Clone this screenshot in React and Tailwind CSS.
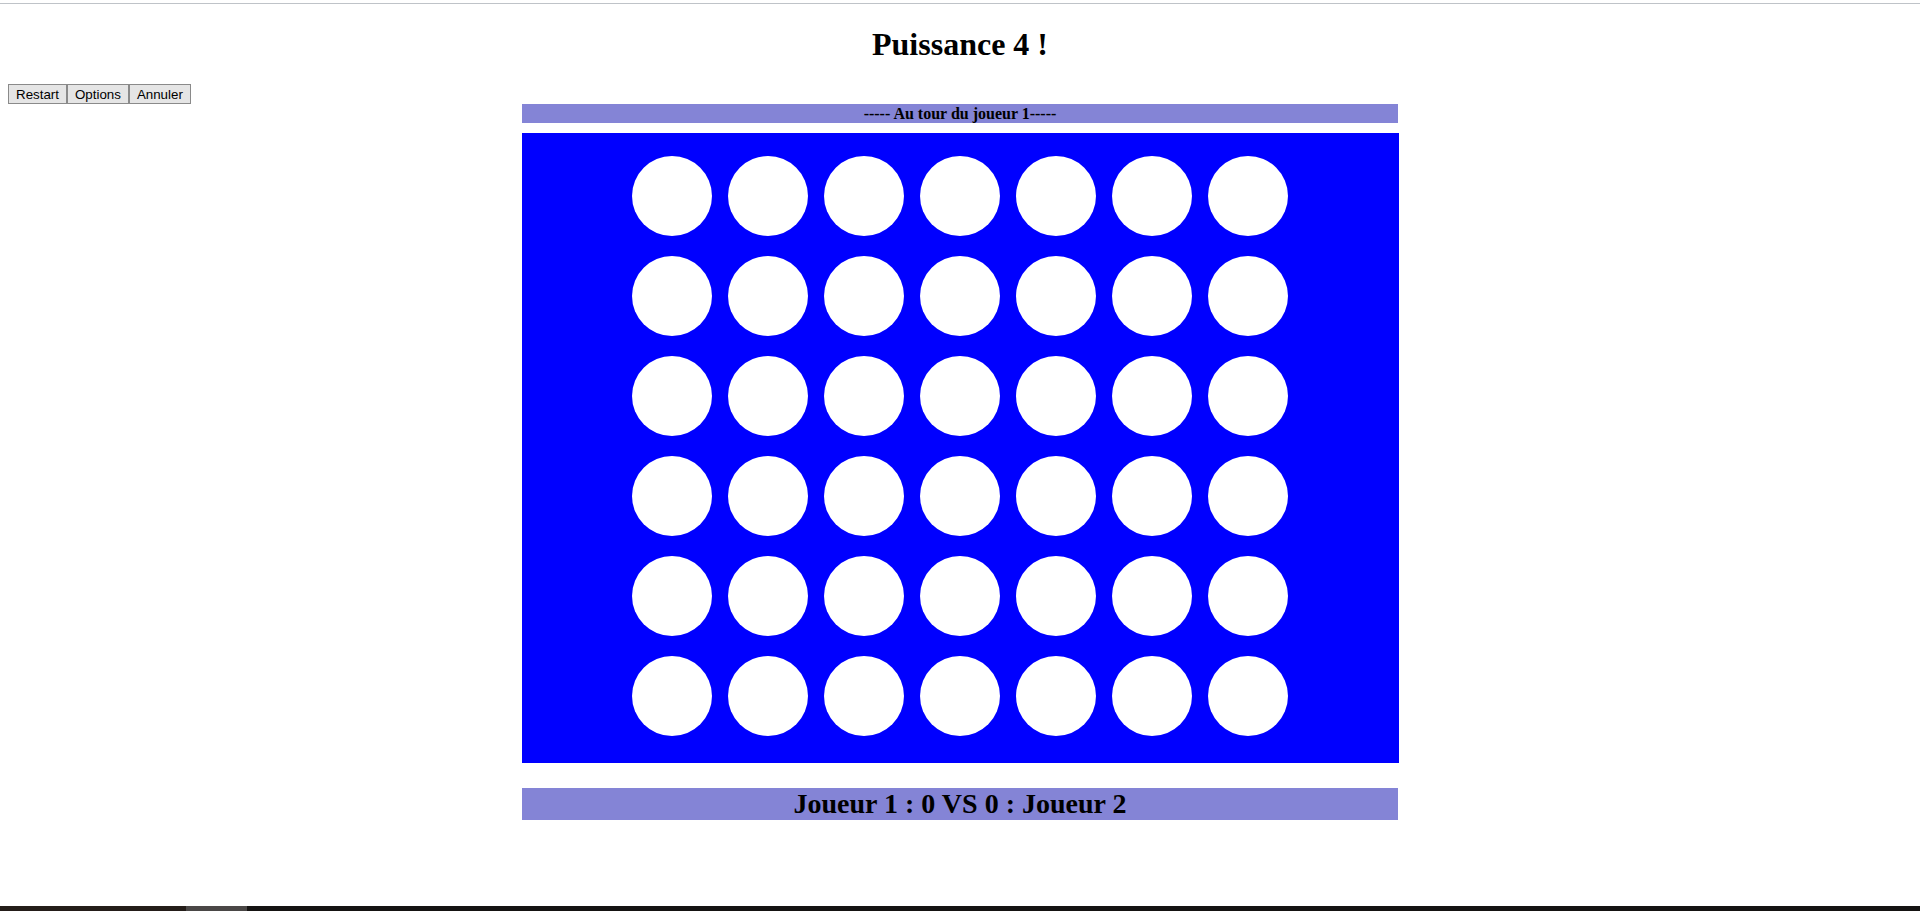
// App.jsx
const ROWS = 6;
const COLS = 7;

function Board() {
  const cells = [];
  for (let r = 0; r < ROWS; r++) {
    for (let c = 0; c < COLS; c++) {
      cells.push(<div key={`${r}-${c}`} className="w-[80px] h-[80px] rounded-full bg-white" />);
    }
  }
  return (
    <div className="mx-auto mt-[10px] w-[877px] h-[630px] bg-[#0000ff] pt-[23px]">
      <div className="grid grid-cols-[repeat(7,80px)] gap-x-[16px] gap-y-[20px] justify-center">
        {cells}
      </div>
    </div>
  );
}

export default function App() {
  const btn =
    "border border-[#8a8a8a] bg-[#e5e5e5] px-[7px] py-[2px] text-[13.33px] leading-[15px] text-black font-['Liberation_Sans',Arial,sans-serif]";

  return (
    <div className="h-screen flex flex-col bg-white font-['Liberation_Serif','Times_New_Roman',serif] text-black">
      <div className="flex-1">
        <div className="h-[3px]" />
        <div className="h-px bg-[#bfc3c8]" />

        {/* titre */}
        <h1 className="mt-[22px] text-center text-[32px] leading-[37px] font-bold">Puissance 4 !</h1>

        {/* boutons */}
        <div className="mt-[21px] pl-[8px] h-[20px] flex">
          <button className={btn}>Restart</button>
          <button className={btn}>Options</button>
          <button className={btn}>Annuler</button>
        </div>

        {/* tour */}
        <div className="mx-auto w-[876px] h-[19px] bg-[#8484d6] text-center text-[16px] leading-[19px] font-bold">
          ----- Au tour du joueur 1-----
        </div>

        <Board />

        {/* score */}
        <div className="mx-auto mt-[25px] w-[876px] h-[32px] bg-[#8484d6] text-center text-[28px] leading-[32px] font-bold">
          Joueur 1 : 0 VS 0 : Joueur 2
        </div>
      </div>

      <div className="h-[5px] flex">
        <div className="w-[186px] bg-[#241d19]" />
        <div className="w-[61px] bg-[#4a4746]" />
        <div className="flex-1 bg-[#151312]" />
      </div>
    </div>
  );
}
